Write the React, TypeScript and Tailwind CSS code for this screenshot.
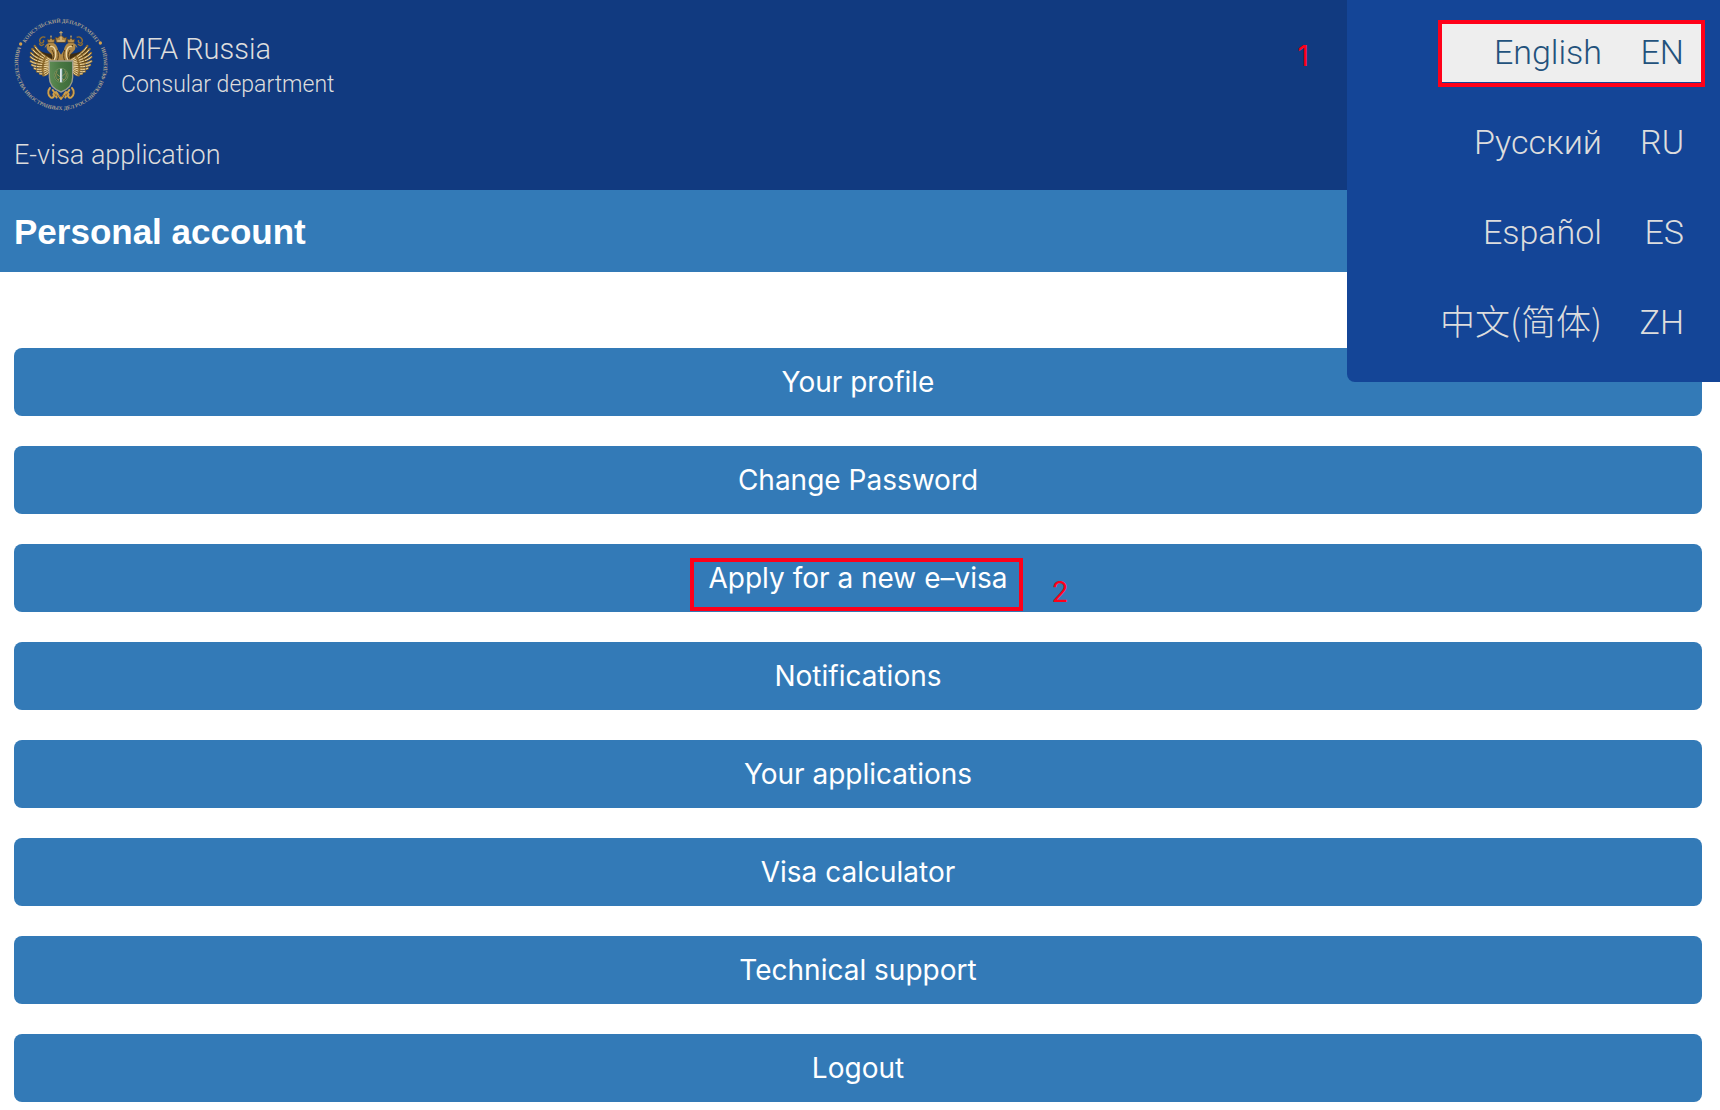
const languages = [
  { name: "English", code: "EN", lang: "en", active: true },
  { name: "Русский", code: "RU", lang: "ru", active: false },
  { name: "Español", code: "ES", lang: "es", active: false },
  { name: "中文(简体)", code: "ZH", lang: "zh", active: false },
];

const actions = [
  { label: "Your profile" },
  { label: "Change Password" },
  { label: "Apply for a new e–visa", step: "2" },
  { label: "Notifications" },
  { label: "Your applications" },
  { label: "Visa calculator" },
  { label: "Technical support" },
  { label: "Logout" },
];

const feathers = [
  "M160 184C142 174 118 162 104 138",
  "M158 186C138 178 112 168 97 147",
  "M157 189C136 183 108 177 93 159",
  "M156 192C136 188 108 186 92 171",
  "M155 195C136 194 110 195 92 184",
  "M154 198C138 199 114 204 96 195",
  "M153 201C140 204 120 213 103 205",
  "M152 204C142 208 128 219 111 214",
  "M151 207C144 212 134 224 120 221",
  "M150 210C147 216 141 226 130 226",
];

/** One half of the eagle; the other half is its mirror image. */
function EagleHalf() {
  return (
    <g>
      <path d="M162 160C146 164 122 158 104 142C96 172 106 204 134 220L152 212Z" fill="#3d2c12" />
      {feathers.map((d) => (
        <path key={d} d={d} fill="none" stroke="#94702f" strokeWidth="7" strokeLinecap="round" />
      ))}
      {feathers.map((d) => (
        <path key={d} d={d} fill="none" stroke="#ecd6a2" strokeWidth="3" strokeLinecap="round" strokeDasharray="22 8 12 5" />
      ))}
      <path d="M183 186L152 184C160 176 160 166 150 158C140 152 138 142 141 136L134 145C134 138 138 132 146 129C160 124 172 134 174 150L183 164Z" fill="#b08a48" />
      <path d="M150 140C160 136 166 146 167 158C168 168 166 174 162 180" fill="none" stroke="#ecd6a4" strokeWidth="4" />
      <path d="M172 150C176 162 176 172 172 182M156 150C162 158 163 168 160 178" fill="none" stroke="#5b3f16" strokeWidth="3" />
      <circle cx="149" cy="137" r="2" fill="#3a2508" />
      <path d="M144 128L142 117L148 120L153 113L158 120L164 117L162 128Z" fill="#b8914f" stroke="#5d4420" strokeWidth="2" />
      <path d="M153 106V114M150 109H156" stroke="#c9a666" strokeWidth="2" />
      <path d="M136 112C126 108 116 116 120 126C124 134 134 126 130 120M132 132C124 140 120 136 118 130" fill="none" stroke="#94702f" strokeWidth="4" />
      <path d="M150 264C142 272 144 288 152 292C160 296 164 288 160 282M158 270C164 276 166 286 170 292M168 276C174 282 176 290 183 296" fill="none" stroke="#cfa04a" strokeWidth="6" strokeLinecap="round" />
      <path d="M150 272C148 280 152 288 156 288M164 280L168 288M176 284L180 292" fill="none" stroke="#6f4312" strokeWidth="2" />
    </g>
  );
}

function Emblem() {
  return (
    <svg viewBox="42 51 282 282" className="size-[94px] shrink-0" role="img" aria-label="Consular department emblem">
      <defs>
        <path id="ringTop" d="M59 192A124 124 0 0 1 307 192" />
        <path id="ringBottom" d="M54 139A139 139 0 1 0 312 139" />
        <linearGradient id="shieldFill" x1="0" x2="1">
          <stop offset="0" stopColor="#5e8c55" />
          <stop offset="0.5" stopColor="#487742" />
          <stop offset="1" stopColor="#3d6a3a" />
        </linearGradient>
      </defs>
      <g fill="#aaa08e" fontFamily="'Liberation Serif', serif" fontSize="16" fontWeight="700" textAnchor="middle">
        <text>
          <textPath href="#ringTop" startOffset="50%">КОНСУЛЬСКИЙ ДЕПАРТАМЕНТ</textPath>
        </text>
        <text>
          <textPath href="#ringBottom" startOffset="50%">МИНИСТЕРСТВА ИНОСТРАННЫХ ДЕЛ РОССИЙСКОЙ ФЕДЕРАЦИИ</textPath>
        </text>
      </g>
      <circle cx="62" cy="132" r="5" fill="#d2a04c" />
      <circle cx="301" cy="129" r="5" fill="#d2a04c" />
      <EagleHalf />
      <g transform="matrix(-1 0 0 1 366 0)">
        <EagleHalf />
      </g>
      <path d="M183 93V108M178 98H188" stroke="#d4ae66" strokeWidth="3" />
      <path d="M169 127L166 112L174 114C176 106 190 106 192 114L200 112L197 127Z" fill="#b08642" stroke="#5d4420" strokeWidth="2" />
      <path d="M172 123H194M183 109V120" stroke="#ecd6a2" strokeWidth="3" />
      <path d="M148 183H218V232C218 256 203 269 183 276C163 269 148 256 148 232Z" fill="url(#shieldFill)" stroke="#9a9c8c" strokeWidth="4" />
      <circle cx="183" cy="226" r="21" fill="#3f6f45" stroke="#6f8f5c" strokeWidth="3" />
      <path d="M172 212C164 222 166 236 177 242M194 212C202 222 200 236 189 242M174 240L196 220M192 240L170 222" fill="none" stroke="#a39a55" strokeWidth="2.5" />
      <path d="M183 206V247" stroke="#dfe9ea" strokeWidth="6" />
      <path d="M186 208V247" stroke="#7fa3ae" strokeWidth="2" />
    </svg>
  );
}

export default function App() {
  return (
    <div className="relative min-h-screen bg-white font-['Inter',sans-serif]">
      <header className="bg-[#113a80] px-3.5 pt-[17px] pb-[17px] font-['Roboto',sans-serif] font-light text-[#dddddd]">
        <div className="flex items-center gap-[13px]">
          <Emblem />
          <div className="pt-1">
            <div className="text-[29px] leading-[38px]">MFA Russia</div>
            <div className="text-[23px] leading-[34px]">Consular department</div>
          </div>
        </div>
        <div className="mt-[26px] text-[27px] leading-9">E-visa application</div>
      </header>

      <h1 className="bg-[#337ab7] px-3.5 pt-[22px] pb-5 font-['Liberation_Sans',sans-serif] text-[35px] leading-10 font-bold text-white">
        Personal account
      </h1>

      <main className="flex flex-col gap-[30px] pt-[76px] pr-[18px] pb-[7px] pl-3.5">
        {actions.map(({ label, step }) => (
          <button
            key={label}
            type="button"
            className="w-full rounded-lg bg-[#337ab7] py-[17px] text-center text-[28px] leading-[34px] text-white"
          >
            {step ? (
              <span className="relative inline-block">
                {label}
                <span className="absolute -top-[3px] -right-4 -bottom-4 -left-[19px] border-4 border-[#ff0019]" />
                <span className="absolute top-3.5 left-full ml-11 text-[#ff0019]">{step}</span>
              </span>
            ) : (
              label
            )}
          </button>
        ))}
      </main>

      <nav
        aria-label="Language"
        className="absolute top-0 right-0 flex w-[373px] flex-col items-end gap-[23px] rounded-bl-lg bg-[#144597] pt-5 pr-[15px] pb-[25px] font-['Roboto',sans-serif] text-[34px] font-light text-[#dddddd]"
      >
        <span className="absolute top-[31px] right-full mr-[38px] font-['Inter',sans-serif] text-[28px] leading-[50px] font-normal text-[#ff0019]">
          1
        </span>
        {languages.map(({ name, code, lang, active }) => (
          <a
            key={code}
            href={`#${lang}`}
            className={
              active
                ? "flex h-[67px] w-[267px] items-center justify-end gap-9 border-4 border-[#ff0019] bg-[#eeeeee] pr-[17px] pb-[3px] text-[#23527c] shadow-[inset_0_-1px_0_#144597]"
                : "flex h-[67px] w-[267px] items-center justify-end gap-9 pr-[21px] pb-[3px]"
            }
          >
            <span lang={lang} className={lang === "zh" ? "pb-1 font-['Noto_Sans_CJK_SC',sans-serif] text-[35px]" : ""}>
              {name}
            </span>
            <span className="w-[46px] text-right">{code}</span>
          </a>
        ))}
      </nav>
    </div>
  );
}
